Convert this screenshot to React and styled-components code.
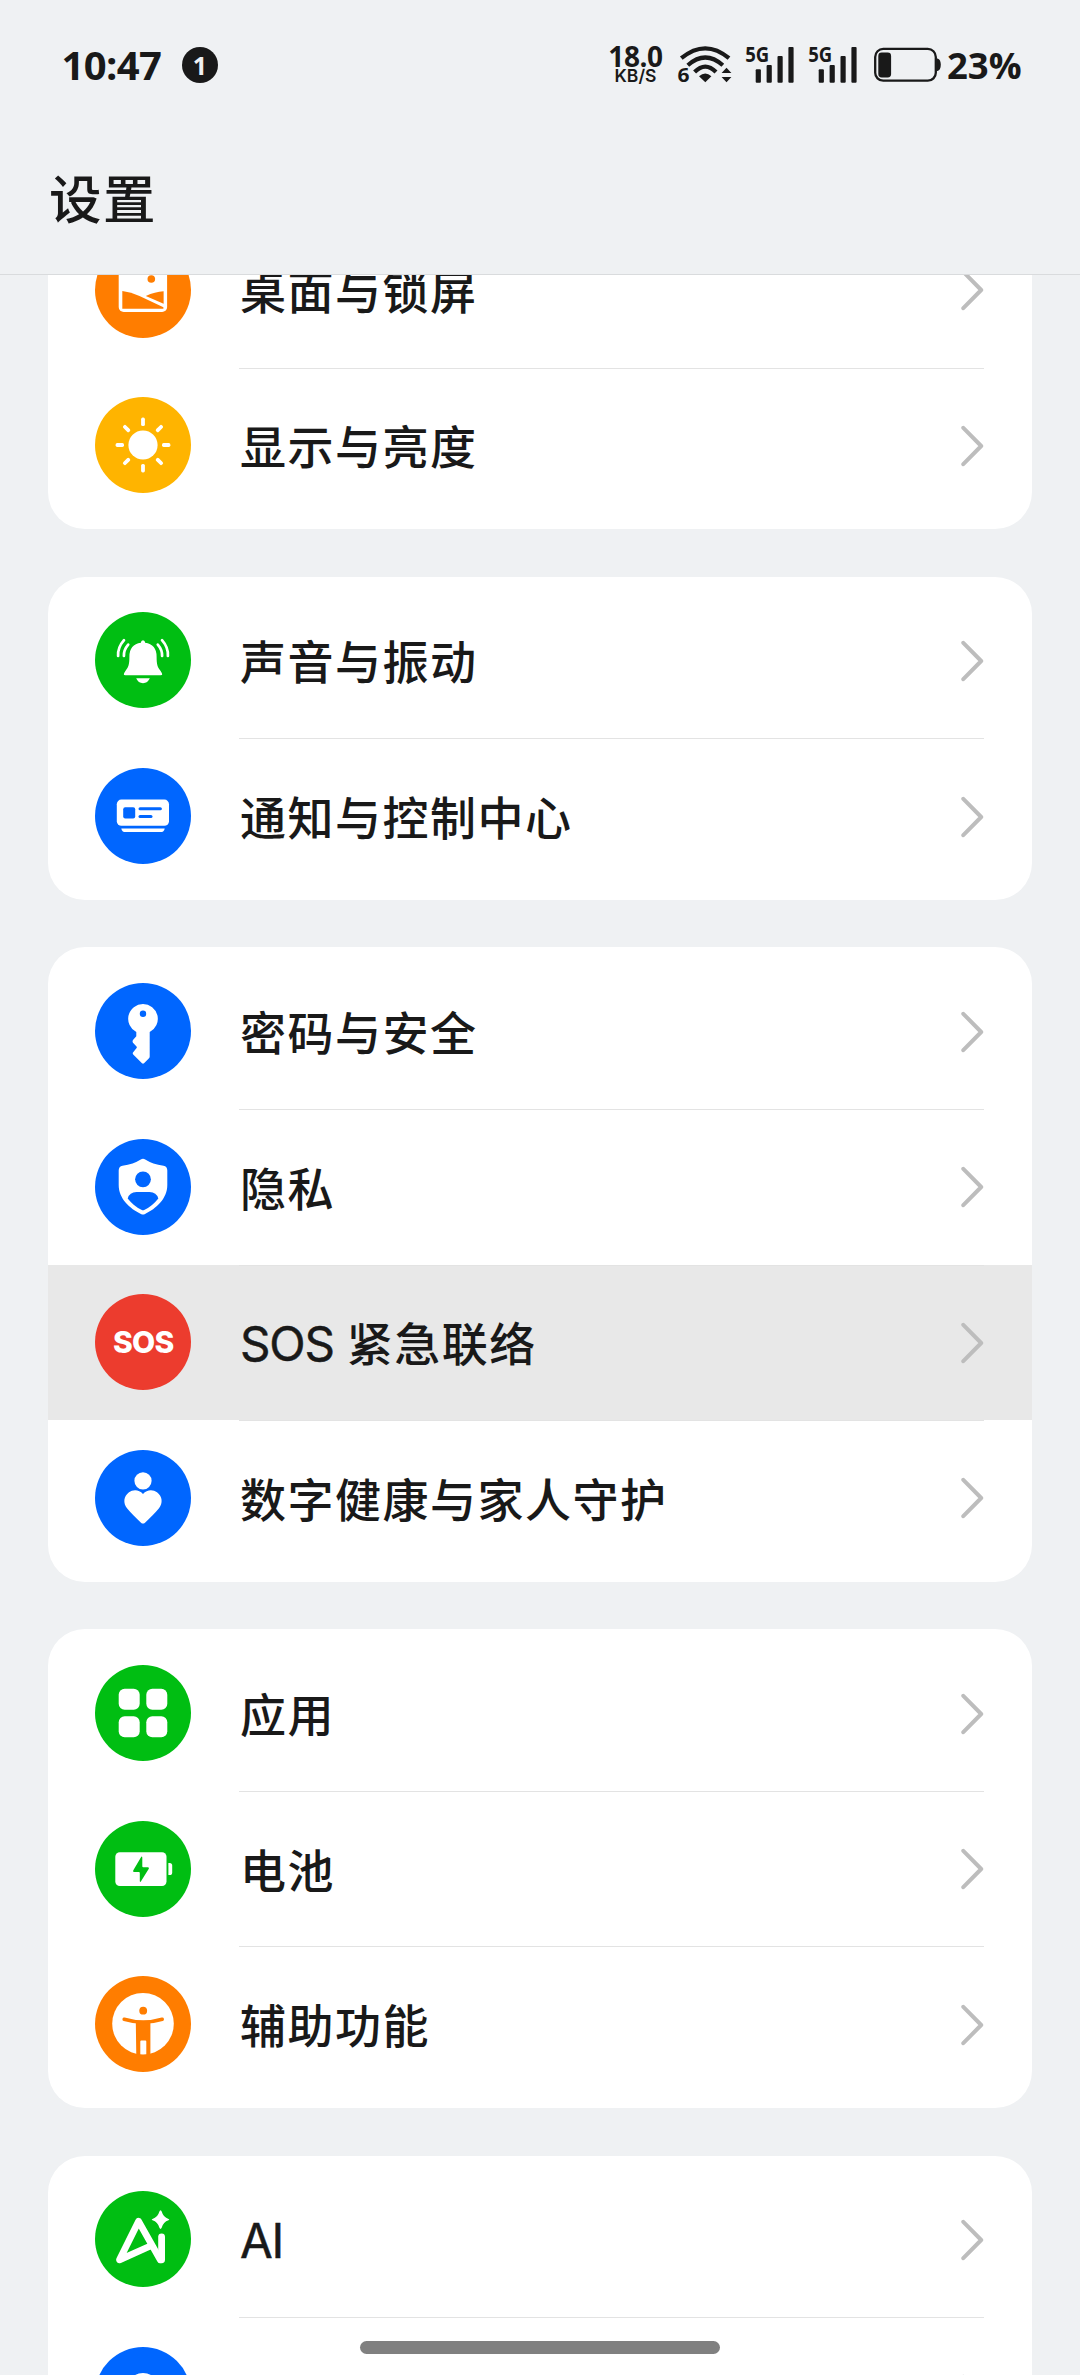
import React from "react";
import styled, { createGlobalStyle } from "styled-components";

const GlobalStyle = createGlobalStyle`
  * {
    box-sizing: border-box;
  }
  html,
  body {
    margin: 0;
    padding: 0;
    background-color: #eff1f3;
  }
`;

const Screen = styled.div`
  position: relative;
  display: flex;
  flex-direction: column;
  width: 1080px;
  height: 2375px;
  overflow: hidden;
  background-color: #eff1f3;
  color: #191919;
  font-family: "Lato", "Noto Sans CJK SC", sans-serif;
`;

const Header = styled.header`
  flex: none;
  height: 275px;
  border-bottom: 1px solid #d9dbdd;
`;

const StatusBar = styled.div`
  display: flex;
  align-items: center;
  justify-content: space-between;
  height: 130px;
  padding: 0 57px 0 61.500px;
  font-family: "Open Sans", sans-serif;
  font-weight: 700;
  white-space: nowrap;
`;

const StatusSide = styled.div`
  display: flex;
  align-items: center;
`;

const Clock = styled.div`
  width: 120.500px;
  font-size: 40px;
  line-height: 44px;
  letter-spacing: -0.600px;
`;

const Badge = styled.div`
  width: 36px;
  height: 36px;
  border-radius: 50%;
  background-color: #191919;
  color: #eff1f3;
  font-size: 25px;
  line-height: 36px;
  text-align: center;
`;

const Speed = styled.div`
  display: flex;
  flex-direction: column;
  align-items: center;
  width: 53px;
  margin: -4px 16px 0 0;
  font-size: 28px;
  line-height: 25px;
  letter-spacing: -0.400px;
`;

const SpeedUnit = styled.span`
  font-family: "Inter", sans-serif;
  font-size: 17.500px;
  font-weight: 600;
  line-height: 14px;
  letter-spacing: 0;
`;

const StatusIcon = styled.svg`
  display: block;
  flex: none;
  overflow: visible;
  margin-right: ${(props) => props.$gap}px;
`;

const Percent = styled.div`
  width: 76px;
  font-size: 36.500px;
  line-height: 40px;
`;

const Title = styled.h1`
  display: flex;
  align-items: center;
  height: 137px;
  margin: 0;
  padding-left: 49px;
  font-size: 52.500px;
  font-weight: 500;
  line-height: 60px;
  letter-spacing: 1.500px;
`;

const List = styled.main`
  flex: 1;
  min-height: 0;
  overflow: hidden;
  display: flex;
  flex-direction: column;
  gap: 47.5px;
  padding: 0 48px;
`;

// the list is scrolled, so the first card starts under the header
const Card = styled.section`
  flex: none;
  padding: 6px 0;
  border-radius: 37px;
  background-color: #fff;
  overflow: hidden;
  &:first-child {
    margin-top: -69px;
  }
`;

const Row = styled.div`
  display: flex;
  align-items: center;
  height: 155.6px;
  padding: 0 48px 0 47.3px;
  background-color: ${(props) => (props.$pressed ? "#e8e8e8" : "transparent")};
`;

const IconCircle = styled.div`
  flex: none;
  width: 96px;
  height: 96px;
  margin-right: 47.7px;
  border-radius: 50%;
  background-color: ${(props) => props.$color};
  svg {
    display: block;
  }
`;

const RowBody = styled.div`
  flex: 1;
  display: flex;
  align-items: center;
  justify-content: space-between;
  height: 100%;
  border-top: 1px solid ${(props) => (props.$line ? "#e3e3e3" : "transparent")};
`;

const Label = styled.span`
  padding: 3px 0 0 1px;
  font-size: 46px;
  font-weight: 500;
  line-height: 60px;
  letter-spacing: 1.5px;
  white-space: nowrap;
`;

const Latin = styled.span`
  font-family: "Inter", sans-serif;
  font-size: 47.5px;
  font-weight: 400;
  letter-spacing: -1.2px;
  -webkit-text-stroke: 0.5px #191919;
`;

const HomeBar = styled.div`
  position: absolute;
  left: 360px;
  top: 2341px;
  width: 360px;
  height: 13px;
  border-radius: 7px;
  background-color: #808080;
`;

const WifiIcon = () => (
  <StatusIcon $gap={13.5} width="54" height="38" viewBox="0 0 54 38" fill="#191919">
    <g fill="none" stroke="#191919" strokeWidth="4.2">
      <path d="M3.3 12.2Q27.3 -7.6 51 12.2" />
      <path d="M9.8 19.3Q27.3 3.8 44.8 19.3" />
      <path d="M16.6 26Q27.3 15.2 38 26" />
    </g>
    <path d="M21 30.2Q27.3 24.8 33.4 30.2L27.3 36.2Z" />
    <path d="M43.6 27L48.5 21.8L53.4 27ZM43.6 31L48.5 36.2L53.4 31Z" />
    <text x="-0.6" y="36.4" fontSize="19.5" textLength="12" lengthAdjust="spacingAndGlyphs">
      6
    </text>
  </StatusIcon>
);

const SignalIcon = ({ gap }) => (
  <StatusIcon $gap={gap} width="48" height="38" viewBox="0 0 48 38" fill="#191919">
    <text x="-0.8" y="16.2" fontSize="21" textLength="24" lengthAdjust="spacingAndGlyphs">
      5G
    </text>
    <rect x="9.7" y="23.3" width="5.2" height="13.5" rx="1" />
    <rect x="20.6" y="19" width="5.2" height="17.8" rx="1" />
    <rect x="31.5" y="10" width="5.2" height="26.8" rx="1" />
    <rect x="42.4" y="1" width="5.2" height="35.8" rx="1" />
  </StatusIcon>
);

const BatteryIcon = () => (
  <StatusIcon $gap={6} width="67" height="36" viewBox="0 0 67 36" fill="#191919">
    <rect x="1.2" y="1.9" width="60.6" height="31.8" rx="8" fill="none" stroke="#191919" strokeWidth="2.3" />
    <rect x="4.3" y="5.5" width="12.8" height="25" rx="3.4" />
    <path d="M62.4 11.5H63.5Q66.8 12.5 66.8 17.8Q66.8 23 63.5 24H62.4Z" />
  </StatusIcon>
);

const Svg = ({ children }) => (
  <svg width="96" height="96" viewBox="0 0 96 96" fill="#fff">
    {children}
  </svg>
);

const DesktopIcon = () => (
  <Svg>
    <rect x="23.7" y="22" width="48.4" height="48" rx="5" />
    <circle cx="56.3" cy="37" r="3.8" fill="#ff7d00" />
    <path d="M27.3 49Q36 50 44.5 54L68.4 65.3V66.8H27.3Z" fill="#ff7d00" />
    <path d="M50.8 54Q60 49.6 68.6 49.2V61.8Z" fill="#ff7d00" />
  </Svg>
);

const SunIcon = () => (
  <Svg>
    <circle cx="48" cy="48" r="14.6" />
    {[0, 45, 90, 135, 180, 225, 270, 315].map((deg) => (
      <rect
        key={deg}
        x="46.1"
        y="20.6"
        width="3.8"
        height="8.4"
        rx="1.6"
        transform={`rotate(${deg} 48 48)`}
      />
    ))}
  </Svg>
);

const BellIcon = () => (
  <Svg>
    <path d="M45.9 30.8Q45.9 28.2 48 28.2Q50.1 28.2 50.1 30.8Q61.6 32.6 61.6 44.5C61.6 53 62.6 55 65.6 59Q68.8 63.3 65.6 63.3H30.4Q27.2 63.3 30.4 59C33.4 55 34.4 53 34.4 44.5Q34.4 32.6 45.9 30.8Z" />
    <path d="M41.2 66.3H54.8Q52.8 71.2 48 71.2Q43.2 71.2 41.2 66.3Z" />
    <g fill="none" stroke="#fff" strokeWidth="2.7" strokeLinecap="round">
      <path d="M29 28.2Q22.6 35.5 23.1 44" />
      <path d="M33.2 32.6Q28.6 38 28.9 44" />
      <path d="M67 28.2Q73.4 35.5 72.9 44" />
      <path d="M62.8 32.6Q67.4 38 67.1 44" />
    </g>
  </Svg>
);

const NoticeIcon = () => (
  <Svg>
    <rect x="21.8" y="31.6" width="52.2" height="26.2" rx="4.6" />
    <rect x="28.2" y="39.2" width="12" height="11.2" rx="2" fill="#0066ff" />
    <rect x="43.5" y="39.3" width="23.4" height="3" rx="1.5" fill="#0066ff" />
    <rect x="43.5" y="46.9" width="14" height="3" rx="1.5" fill="#0066ff" />
    <path d="M26.3 60.4H69.7Q69.2 64 65.5 64H30.5Q26.8 64 26.3 60.4Z" />
  </Svg>
);

const KeyIcon = () => (
  <Svg>
    <path d="M48 21A14.8 14.8 0 0 1 54.7 49V73.5Q54.7 74.6 54 75.3L49 80.2Q48 81.1 47 80.2L38.2 71.4Q37.2 70.3 38.2 69.2L41.6 65Q42.2 64.2 41.5 63.5L38.2 60Q36.9 58.4 38.2 56.8L41.3 53.3V49A14.8 14.8 0 0 1 48 21Z" />
    <circle cx="48" cy="30.7" r="3.2" fill="#0066ff" />
  </Svg>
);

const ShieldIcon = () => (
  <Svg>
    <path d="M45.8 20.4Q48 19.3 50.2 20.4Q57.5 25 68.5 26.8Q72.3 27.6 72.3 31.5V46C72.3 59.5 61.5 69.5 49.6 75.2Q48 76 46.4 75.2C34.5 69.5 23.7 59.5 23.7 46V31.5Q23.7 27.6 27.5 26.8Q38.5 25 45.8 20.4Z" />
    <circle cx="48" cy="40.3" r="7.9" fill="#0066ff" />
    <path d="M41.5 53H54.5Q61.5 53 63.3 59.5Q57 67.5 49.2 71Q48 71.5 46.8 71Q39 67.5 32.7 59.5Q34.5 53 41.5 53Z" fill="#0066ff" />
  </Svg>
);

const SosMark = styled.div`
  font-family: "Inter", sans-serif;
  font-size: 30px;
  font-weight: 800;
  line-height: 96px;
  letter-spacing: -0.8px;
  text-align: center;
  color: #fff;
`;

const HeartIcon = () => (
  <Svg>
    <circle cx="48" cy="30.8" r="8.6" />
    <path d="M48 43.9C52 39.3 58 39.3 62 42.2C67.5 46.3 68 53 64 58.3C60.5 63 54.5 68.3 50 72.7Q48 74.5 46 72.7C41.5 68.3 35.5 63 32 58.3C28 53 28.5 46.3 34 42.2C38 39.3 44 39.3 48 43.9Z" />
  </Svg>
);

const AppsIcon = () => (
  <Svg>
    <rect x="23.7" y="23.8" width="21" height="21" rx="6" />
    <rect x="51.3" y="23.8" width="21" height="21" rx="6" />
    <rect x="23.7" y="51.3" width="21" height="21" rx="6" />
    <rect x="51.3" y="51.3" width="21" height="21" rx="6" />
  </Svg>
);

const PowerIcon = () => (
  <Svg>
    <rect x="20.3" y="31.3" width="51.2" height="33.7" rx="4.5" />
    <path d="M73.4 41.9H74.6Q77.2 41.9 77.2 44.5V51.5Q77.2 54.1 74.6 54.1H73.4Z" />
    <path
      d="M46 36.3Q46.8 34.9 47.3 36.4V45.3Q47.3 46.2 48.2 46.2H52.8Q54.6 46.3 53.8 47.8L46 60.3Q45 61.6 44.8 60V51.9Q44.8 51 43.9 51H39Q37.5 50.8 38.3 49.3Z"
      fill="#00be12"
    />
  </Svg>
);

const AccessIcon = () => (
  <Svg>
    <circle cx="48" cy="47.8" r="30.8" />
    <circle cx="48.2" cy="34.7" r="3.9" fill="#ff7d00" />
    <path d="M29.2 43.3Q48.2 49 67.2 43.3" fill="none" stroke="#ff7d00" strokeWidth="3.6" strokeLinecap="round" />
    <path d="M40.8 46H55.4V80H51.3V65.4Q51.3 64.4 50.3 64.4H46.3Q45.3 64.4 45.3 65.4V80H41.3Z" fill="#ff7d00" />
  </Svg>
);

const AiIcon = () => (
  <Svg>
    <g fill="none" stroke="#fff" strokeWidth="6.8" strokeLinecap="round" strokeLinejoin="round">
      <path d="M56.5 54.5L24.5 68.8L43.6 30.3L65.3 68.8" />
      <path d="M66.6 45.8V68.8" />
    </g>
    <path d="M65.5 19.2Q66.3 19.2 66.8 20.8Q68.3 26.3 73.5 28Q75.3 28.6 73.5 29.3Q68.3 31 66.8 36.6Q65.5 39.3 64.3 36.6Q62.8 31 57.5 29.3Q55.8 28.6 57.5 28Q62.8 26.3 64.3 20.8Q64.8 19.2 65.5 19.2Z" />
  </Svg>
);

const CloudIcon = () => (
  <Svg>
    <path d="M48 26A17 17 0 0 1 64.500 39.500A13.500 13.500 0 0 1 62 66H34A13.500 13.500 0 0 1 31.500 39.500A17 17 0 0 1 48 26Z" />
  </Svg>
);

const Chevron = () => (
  <svg width="24" height="42" viewBox="0 0 24 42" fill="none" stroke="#bdbdbd" strokeWidth="4" strokeLinecap="round" strokeLinejoin="round">
    <path d="M3.3 2.8L21.2 21L3.3 39.2" />
  </svg>
);

const groups = [
  [
    { label: "桌面与锁屏", color: "#ff7d00", icon: <DesktopIcon /> },
    { label: "显示与亮度", color: "#ffb400", icon: <SunIcon /> },
  ],
  [
    { label: "声音与振动", color: "#00be12", icon: <BellIcon /> },
    { label: "通知与控制中心", color: "#0066ff", icon: <NoticeIcon /> },
  ],
  [
    { label: "密码与安全", color: "#0066ff", icon: <KeyIcon /> },
    { label: "隐私", color: "#0066ff", icon: <ShieldIcon /> },
    { latin: "SOS", label: " 紧急联络", color: "#ec3c2e", icon: <SosMark>SOS</SosMark>, pressed: true },
    { label: "数字健康与家人守护", color: "#0066ff", icon: <HeartIcon /> },
  ],
  [
    { label: "应用", color: "#00be12", icon: <AppsIcon /> },
    { label: "电池", color: "#00be12", icon: <PowerIcon /> },
    { label: "辅助功能", color: "#ff7d00", icon: <AccessIcon /> },
  ],
  [
    { latin: "AI", label: "", color: "#00be12", icon: <AiIcon /> },
    { label: "云服务", color: "#0066ff", icon: <CloudIcon /> },
  ],
];

const App = () => {
  return (
    <Screen>
      <GlobalStyle />
      <Header>
        <StatusBar>
          <StatusSide>
            <Clock>10:47</Clock>
            <Badge>1</Badge>
          </StatusSide>
          <StatusSide>
            <Speed>
              18.0
              <SpeedUnit>KB/S</SpeedUnit>
            </Speed>
            <WifiIcon />
            <SignalIcon gap={15.5} />
            <SignalIcon gap={17} />
            <BatteryIcon />
            <Percent>23%</Percent>
          </StatusSide>
        </StatusBar>
        <Title>设置</Title>
      </Header>
      <List>
        {groups.map((rows, index) => (
          <Card key={index}>
            {rows.map((row, i) => (
              <Row key={i} $pressed={row.pressed}>
                <IconCircle $color={row.color}>{row.icon}</IconCircle>
                <RowBody $line={i > 0}>
                  <Label>
                    {row.latin && <Latin>{row.latin}</Latin>}
                    {row.label}
                  </Label>
                  <Chevron />
                </RowBody>
              </Row>
            ))}
          </Card>
        ))}
      </List>
      <HomeBar />
    </Screen>
  );
};

export default App;
